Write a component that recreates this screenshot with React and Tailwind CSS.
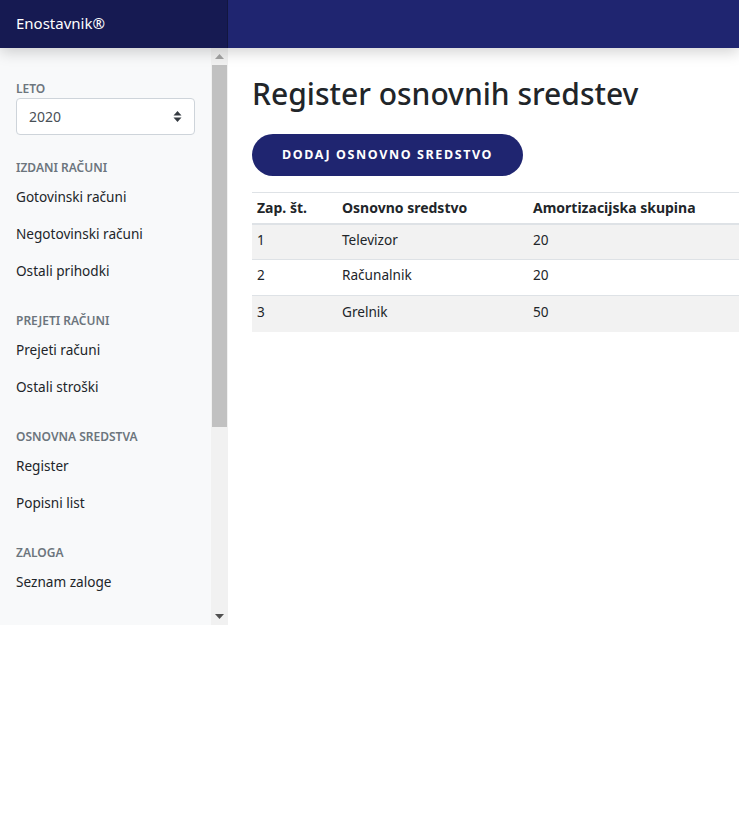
import React from "react";

const sections = [
  { title: "Izdani računi", items: ["Gotovinski računi", "Negotovinski računi", "Ostali prihodki"] },
  { title: "Prejeti računi", items: ["Prejeti računi", "Ostali stroški"] },
  { title: "Osnovna sredstva", items: ["Register", "Popisni list"] },
  { title: "Zaloga", items: ["Seznam zaloge"] },
];

const rows = [
  ["1", "Televizor", "20"],
  ["2", "Računalnik", "20"],
  ["3", "Grelnik", "50"],
];

function SortIcon() {
  return (
    <svg width="9" height="13" viewBox="0 0 9 13" className="text-[#343a40]">
      <path d="M4.5 1 L8.5 5.5 H0.5 Z" fill="currentColor" />
      <path d="M4.5 12 L8.5 7.5 H0.5 Z" fill="currentColor" />
    </svg>
  );
}

function ScrollBar() {
  return (
    <div className="flex w-[17px] shrink-0 flex-col items-center bg-[#f1f1f1]">
      <div className="flex h-[17px] w-full items-center justify-center">
        <svg width="9" height="5" viewBox="0 0 9 5">
          <path d="M4.5 0 L9 5 H0 Z" fill="#a3a3a3" />
        </svg>
      </div>
      <div className="h-[362px] w-[15px] bg-[#c1c1c1]" />
      <div className="flex-1" />
      <div className="flex h-[17px] w-full items-center justify-center">
        <svg width="9" height="5" viewBox="0 0 9 5">
          <path d="M0 0 H9 L4.5 5 Z" fill="#505050" />
        </svg>
      </div>
    </div>
  );
}

export default function App() {
  return (
    <div
      className="min-h-[836px] bg-white text-[#212529]"
      style={{ fontFamily: '"Noto Sans", "Open Sans", sans-serif' }}
    >
      <header className="relative z-10 flex h-12 shadow-[0_4px_14px_rgba(0,0,0,0.18)]">
        <div className="flex w-[228px] items-center border-r border-[#12163f] bg-[#161a52] pb-[1px] pl-4 text-[15px] text-white">
          Enostavnik®
        </div>
        <div className="flex-1 bg-[#1f2570]" />
      </header>

      <div className="flex">
        <aside className="flex h-[577px] w-[228px] shrink-0 bg-[#f8f9fa]">
          <nav className="flex-1 overflow-hidden pl-4 pr-4 pt-[33px]">
            <div className="text-[12px] font-semibold uppercase leading-4 text-[#6c757d]">Leto</div>
            <div className="mt-[1px] flex h-[37px] items-center justify-between rounded border border-[#ced4da] bg-white pl-3 pr-3 text-[14px] text-[#495057]">
              <span>2020</span>
              <SortIcon />
            </div>
            {sections.map((s, i) => (
              <div key={s.title} className={i === 0 ? "mt-[25px]" : "mt-[23px]"}>
                <div className="text-[12px] font-semibold uppercase leading-4 text-[#6c757d]">{s.title}</div>
                <ul className="mt-[3px]">
                  {s.items.map((it) => (
                    <li key={it} className="flex h-[37px] items-center text-[13.6px] text-[#212529]">
                      {it}
                    </li>
                  ))}
                </ul>
              </div>
            ))}
          </nav>
          <ScrollBar />
        </aside>

        <main className="flex-1 overflow-hidden pl-6 pt-[26px]">
          <h1 className="text-[30px] font-medium leading-[40px] text-[#212529]">Register osnovnih sredstev</h1>
          <button className="mt-[20px] h-[42px] w-[271px] rounded-full bg-[#1f2570] text-[12.5px] font-bold uppercase tracking-[1.6px] text-white">
            Dodaj osnovno sredstvo
          </button>
          <table className="mt-4 w-full border-collapse text-[14px]">
            <thead>
              <tr className="h-[31px] border-t border-[#dee2e6] border-b-2">
                <th className="w-[85px] pl-[5px] text-left font-bold">Zap. št.</th>
                <th className="w-[191px] pl-[5px] text-left font-bold">Osnovno sredstvo</th>
                <th className="pl-[5px] text-left font-bold">Amortizacijska skupina</th>
              </tr>
            </thead>
            <tbody>
              {rows.map((r, i) => (
                <tr
                  key={r[0]}
                  className={`h-[36px] border-t border-[#dee2e6] ${i % 2 === 0 ? "bg-[#f2f2f2]" : "bg-white"}`}
                >
                  {r.map((c, j) => (
                    <td key={j} className="pb-1 pl-[5px] text-[13.6px]">
                      {c}
                    </td>
                  ))}
                </tr>
              ))}
            </tbody>
          </table>
        </main>
      </div>
    </div>
  );
}
